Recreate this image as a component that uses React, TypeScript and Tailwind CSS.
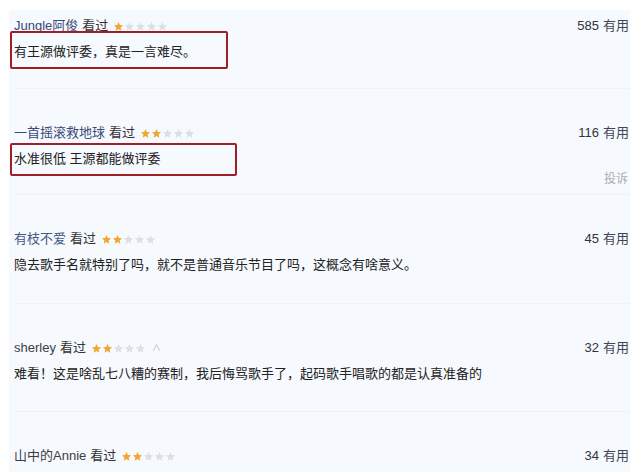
import React from 'react';

type Review = {
  name: string;
  nameColor: string;
  rating: number;
  count: number;
  comment: string;
  box?: { top: number; height: number; width: number };
  report?: boolean;
  caret?: boolean;
  pb: string;
};

const reviews: Review[] = [
  {
    name: 'Jungle阿俊',
    nameColor: 'text-[#3b4a78]',
    rating: 1,
    count: 585,
    comment: '有王源做评委，真是一言难尽。',
    box: { top: -11, height: 38, width: 218 },
    pb: 'pb-[26px]',
  },
  {
    name: '一首摇滚救地球',
    nameColor: 'text-[#3b4a78]',
    rating: 2,
    count: 116,
    comment: '水准很低 王源都能做评委',
    box: { top: -6, height: 33, width: 227 },
    report: true,
    pb: 'pb-[7px]',
  },
  {
    name: '有枝不爱',
    nameColor: 'text-[#445886]',
    rating: 2,
    count: 45,
    comment: '隐去歌手名就特别了吗，就不是普通音乐节目了吗，这概念有啥意义。',
    pb: 'pb-[28px]',
  },
  {
    name: 'sherley',
    nameColor: 'text-[#3c3f47]',
    rating: 2,
    count: 32,
    comment: '难看！这是啥乱七八糟的赛制，我后悔骂歌手了，起码歌手唱歌的都是认真准备的',
    caret: true,
    pb: 'pb-[27px]',
  },
  {
    name: '山中的Annie',
    nameColor: 'text-[#3a3d44]',
    rating: 2,
    count: 34,
    comment: '',
    pb: 'pb-[26px]',
  },
];

function Star({ on }: { on: boolean }) {
  return (
    <svg width="11" height="11" viewBox="0 0 24 24">
      <polygon
        points="12,2 14.9,8.6 22,9.3 16.6,14 18.2,21 12,17.3 5.8,21 7.4,14 2,9.3 9.1,8.6"
        fill={on ? '#f0a631' : '#dcdfe5'}
      />
    </svg>
  );
}

function NameLine({ r }: { r: Review }) {
  return (
    <div className="flex h-[20px] items-center justify-between leading-[20px]">
      <div className="flex items-center">
        <span className={r.nameColor}>{r.name}</span>
        <span className="ml-[4px] text-[#333]">看过</span>
        <span className="ml-[5px] flex items-center">
          {[0, 1, 2, 3, 4].map((i) => (
            <Star key={i} on={i < r.rating} />
          ))}
        </span>
        {r.caret && <span className="ml-[6px] text-[9px] text-[#b8bcc4]">∧</span>}
      </div>
      <div className="pr-[1px]">
        <span className="text-[#333]">{r.count}</span>
        <span className="ml-[4px] text-[#3e4658]">有用</span>
      </div>
    </div>
  );
}

function Row({ r, first }: { r: Review; first?: boolean }) {
  return (
    <div className={(first ? 'pt-[6px] ' : 'border-t border-[#eef1f5] pt-[34px] ') + r.pb}>
      <NameLine r={r} />
      <div className="relative mt-[6px] h-[20px] leading-[20px] text-[#222]">
        {r.comment}
        {r.box && (
          <div
            className="absolute left-[-4px] rounded-[2px] border-2 border-[#9e1f27]"
            style={{ top: r.box.top, height: r.box.height, width: r.box.width }}
          />
        )}
      </div>
      {r.report && (
        <div className="mt-[2px] h-[16px] pr-[2px] text-right text-[12px] leading-[16px] text-[#a9adb5]">
          投诉
        </div>
      )}
    </div>
  );
}

export default function App() {
  return (
    <div
      className="h-[472px] w-[640px] overflow-hidden bg-white pt-[10px] text-[13px]"
      style={{ fontFamily: '"Liberation Sans", "Noto Sans CJK SC", sans-serif' }}
    >
      <div className="ml-[9px] h-[462px] w-[621px] bg-[#f6f9fd] pl-[5px]">
        {reviews.map((r, i) => (
          <Row key={i} r={r} first={i === 0} />
        ))}
      </div>
    </div>
  );
}
